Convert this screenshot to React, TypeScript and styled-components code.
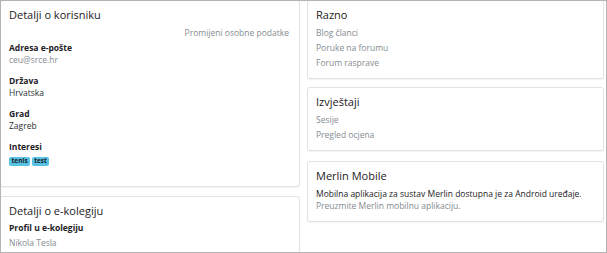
import React from "react";
import styled, { createGlobalStyle } from "styled-components";

const GlobalStyle = createGlobalStyle`
  html, body {
    margin: 0;
    padding: 0;
    background: #ffffff;
  }
  body {
    font-family: "Open Sans", "Liberation Sans", sans-serif;
    color: #1d2125;
  }
  * {
    box-sizing: border-box;
  }
`;

const Frame = styled.div`
  width: 607px;
  height: 253px;
  border: 1px solid #b4b4b4;
  background: #ffffff;
  overflow: hidden;
`;

const Columns = styled.div`
  display: grid;
  grid-template-columns: 300px 297px;
  column-gap: 7px;
  align-items: start;
  margin: -1px 0 0 -1px;
`;

const Column = styled.div`
  display: flex;
  flex-direction: column;
`;

const Card = styled.section<{ gap?: number; padBottom?: number }>`
  border: 1px solid #e2e2e2;
  border-radius: 3px;
  box-shadow: 0 1px 1px rgba(0, 0, 0, 0.05);
  background: #ffffff;
  padding: 6px 8px ${(p) => p.padBottom ?? 8}px;
  margin-bottom: ${(p) => p.gap ?? 8}px;
`;

const CardTitle = styled.h3`
  margin: 0;
  font-size: 11px;
  line-height: 16px;
  font-weight: 400;
  color: #1d2125;
`;

const EditRow = styled.div`
  margin-top: 3px;
  padding-right: 2px;
  text-align: right;
  font-size: 8.5px;
  line-height: 13px;
  color: #858c92;
`;

const Field = styled.div<{ first?: boolean }>`
  margin-top: ${(p) => (p.first ? 3 : 9)}px;
`;

const Label = styled.div`
  font-size: 8.5px;
  line-height: 12px;
  font-weight: 700;
  color: #1d2125;
`;

const Value = styled.div<{ muted?: boolean; tall?: boolean }>`
  font-size: 8.5px;
  line-height: ${(p) => (p.tall ? 17 : 12)}px;
  color: ${(p) => (p.muted ? "#858c92" : "#2b2f33")};
`;

const Tags = styled.div`
  display: flex;
  gap: 1.5px;
  margin-top: 4px;
`;

const Tag = styled.span`
  display: inline-block;
  background: #56c3e6;
  color: #1d2125;
  font-size: 6.5px;
  font-weight: 700;
  line-height: 8.5px;
  padding: 0 2.5px;
  border-radius: 2px;
`;

const LinkList = styled.ul`
  list-style: none;
  margin: 2px 0 0;
  padding: 0;
`;

const LinkItem = styled.li`
  font-size: 8.5px;
  line-height: 15px;
  color: #858c92;
`;

const Text = styled.p<{ muted?: boolean; first?: boolean }>`
  margin: ${(p) => (p.first ? 3.5 : 0)}px 0 0;
  font-size: 8.5px;
  line-height: 12px;
  color: ${(p) => (p.muted ? "#858c92" : "#1d2125")};
`;

export default function App() {
  return (
    <>
      <GlobalStyle />
      <Frame>
        <Columns>
          <Column>
            <Card padBottom={20.5} gap={8.5}>
              <CardTitle>Detalji o korisniku</CardTitle>
              <EditRow>Promijeni osobne podatke</EditRow>
              <Field first>
                <Label>Adresa e-pošte</Label>
                <Value muted>ceu@srce.hr</Value>
              </Field>
              <Field>
                <Label>Država</Label>
                <Value>Hrvatska</Value>
              </Field>
              <Field>
                <Label>Grad</Label>
                <Value>Zagreb</Value>
              </Field>
              <Field>
                <Label>Interesi</Label>
                <Tags>
                  <Tag>tenis</Tag>
                  <Tag>test</Tag>
                </Tags>
              </Field>
            </Card>
            <Card>
              <CardTitle>Detalji o e-kolegiju</CardTitle>
              <Field first>
                <Label>Profil u e-kolegiju</Label>
                <Value muted tall>
                  Nikola Tesla
                </Value>
              </Field>
            </Card>
          </Column>
          <Column>
            <Card>
              <CardTitle>Razno</CardTitle>
              <LinkList>
                <LinkItem>Blog članci</LinkItem>
                <LinkItem>Poruke na forumu</LinkItem>
                <LinkItem>Forum rasprave</LinkItem>
              </LinkList>
            </Card>
            <Card gap={10}>
              <CardTitle>Izvještaji</CardTitle>
              <LinkList>
                <LinkItem>Sesije</LinkItem>
                <LinkItem>Pregled ocjena</LinkItem>
              </LinkList>
            </Card>
            <Card padBottom={9}>
              <CardTitle>Merlin Mobile</CardTitle>
              <Text first>
                Mobilna aplikacija za sustav Merlin dostupna je za Android uređaje.
              </Text>
              <Text muted>Preuzmite Merlin mobilnu aplikaciju.</Text>
            </Card>
          </Column>
        </Columns>
      </Frame>
    </>
  );
}
